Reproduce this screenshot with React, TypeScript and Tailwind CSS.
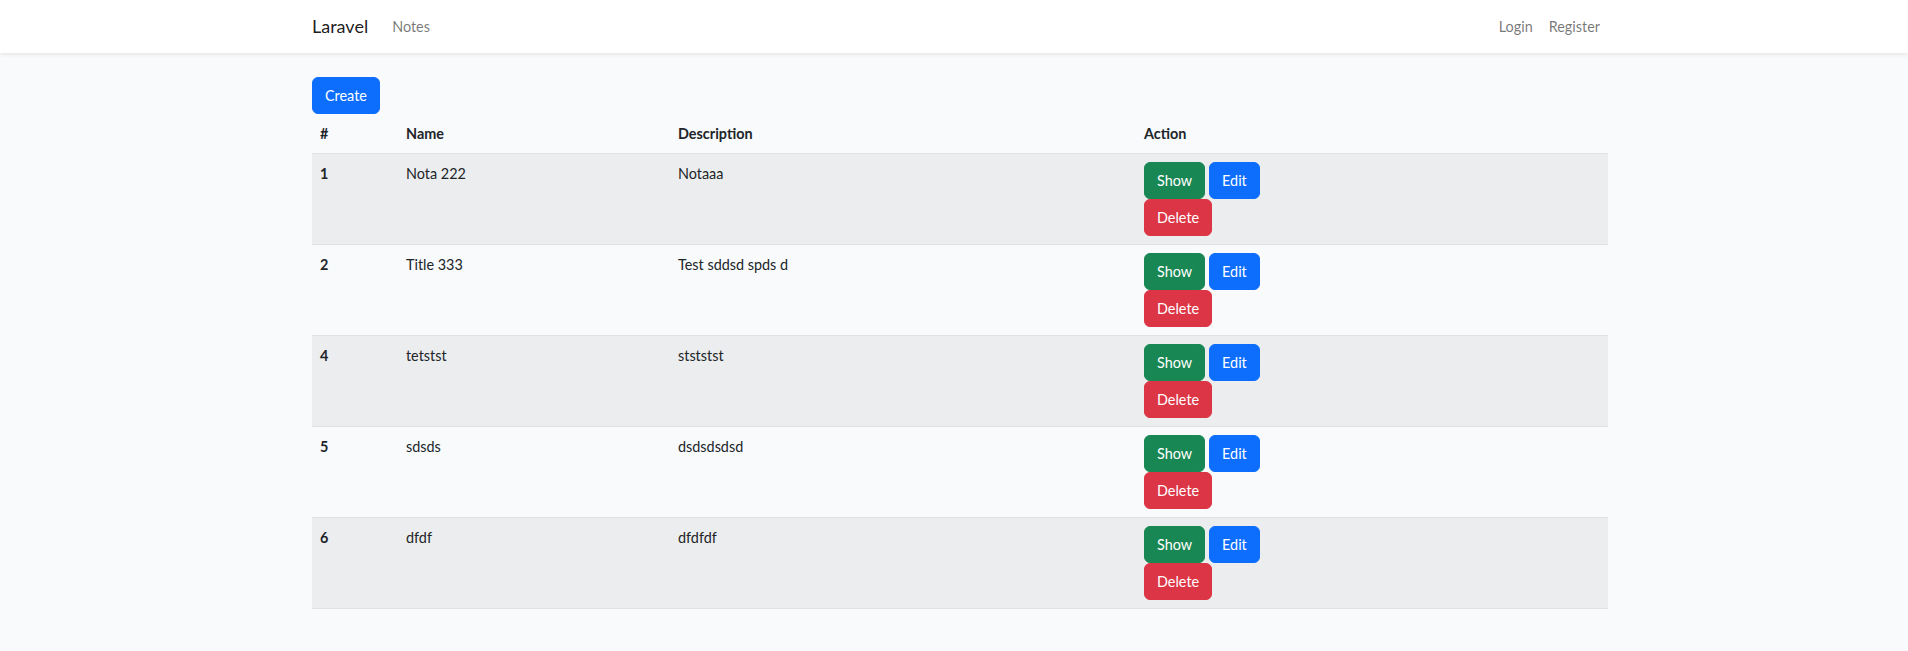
import React from "react";

const rows = [
  { id: 1, name: "Nota 222", desc: "Notaaa" },
  { id: 2, name: "Title 333", desc: "Test sddsd spds d" },
  { id: 4, name: "tetstst", desc: "stststst" },
  { id: 5, name: "sdsds", desc: "dsdsdsdsd" },
  { id: 6, name: "dfdf", desc: "dfdfdf" },
];

export default function App() {
  return (
    <div
      className="min-h-screen bg-[#f8fafc] text-[#212529] text-[14.4px] leading-[23px]"
      style={{ fontFamily: "Lato, 'Noto Sans', sans-serif" }}
    >
      <nav className="bg-white h-[53px] shadow-[0_2px_4px_rgba(0,0,0,0.075)] relative z-10">
        <div className="w-[1296px] ml-[312px] h-full flex items-center">
          <span className="text-[18px] text-black/90 mr-4 leading-[27px]">Laravel</span>
          <span className="px-2 text-black/55">Notes</span>
          <div className="ml-auto flex items-center">
            <span className="px-2 text-black/55">Login</span>
            <span className="px-2 text-black/55">Register</span>
          </div>
        </div>
      </nav>
      <main className="py-6">
        <div className="w-[1296px] ml-[312px]">
          <button className="bg-[#0d6efd] text-white rounded-md px-3 py-[6px] border border-[#0d6efd] leading-[23px]">
            Create
          </button>
          <table className="w-full table-fixed border-collapse">
            <colgroup>
              <col className="w-[86px]" />
              <col className="w-[272px]" />
              <col className="w-[466px]" />
              <col />
            </colgroup>
            <thead>
              <tr className="border-b border-[#dee2e6]">
                <th className="text-left font-bold p-2">#</th>
                <th className="text-left font-bold p-2">Name</th>
                <th className="text-left font-bold p-2">Description</th>
                <th className="text-left font-bold p-2">Action</th>
              </tr>
            </thead>
            <tbody>
              {rows.map((r, i) => (
                <tr
                  key={r.id}
                  className={
                    i % 2 === 0
                      ? "bg-[#ecedee] border-b border-[#dee2e6]"
                      : "border-b border-[#dee2e6]"
                  }
                >
                  <td className="p-2 align-top font-bold">{r.id}</td>
                  <td className="p-2 align-top">{r.name}</td>
                  <td className="p-2 align-top">{r.desc}</td>
                  <td className="p-2 align-top">
                    <div className="flex gap-1">
                      <button className="bg-[#198754] text-white rounded-md px-3 py-[6px] border border-[#198754] leading-[23px]">
                        Show
                      </button>
                      <button className="bg-[#0d6efd] text-white rounded-md px-3 py-[6px] border border-[#0d6efd] leading-[23px]">
                        Edit
                      </button>
                    </div>
                    <div className="flex">
                      <button className="bg-[#dc3545] text-white rounded-md px-3 py-[6px] border border-[#dc3545] leading-[23px]">
                        Delete
                      </button>
                    </div>
                  </td>
                </tr>
              ))}
            </tbody>
          </table>
        </div>
      </main>
    </div>
  );
}
